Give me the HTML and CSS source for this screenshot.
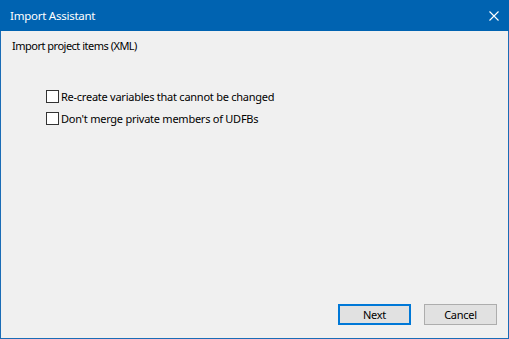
FILE: index.html
```html
<!DOCTYPE html>
<html lang="en">
<head>
	<meta charset="UTF-8">
	<meta name="viewport" content="width=device-width, initial-scale=1.0">
	<title>Import Assistant</title>
	<link rel="stylesheet" href="styles.css">
</head>
<body>
	<div class="window">
		<div class="titlebar">
			<span class="title">Import Assistant</span>
			<button class="close" aria-label="Close">
				<svg width="10" height="10" viewBox="0 0 10 10">
					<path d="M0.5 0.5 L9.5 9.5 M9.5 0.5 L0.5 9.5" stroke="#fff" stroke-width="1.1" fill="none"/>
				</svg>
			</button>
		</div>
		<div class="content">
			<p class="heading">Import project items (XML)</p>
			<div class="options">
				<label class="option">
					<input type="checkbox">
					<span class="box"></span>
					<span>Re-create variables that cannot be changed</span>
				</label>
				<label class="option">
					<input type="checkbox">
					<span class="box"></span>
					<span>Don't merge private members of UDFBs</span>
				</label>
			</div>
		</div>
		<div class="buttons">
			<button class="btn btn-default">Next</button>
			<button class="btn">Cancel</button>
		</div>
	</div>
</body>
</html>
```

FILE: styles.css
```css
body {
	margin: 0;
	font-family: "Noto Sans", sans-serif;
	font-size: 11px;
	letter-spacing: -0.25px;
	color: #000;
}
.window {
	width: 509px;
	height: 339px;
	box-sizing: border-box;
	border: 1px solid #1a6cb6;
	border-top: none;
	background-color: #f0f0f0;
	display: flex;
	flex-direction: column;
}
.titlebar {
	height: 31px;
	margin: 0 -1px;
	background-color: #0063b1;
	color: #fff;
	display: flex;
	align-items: center;
	justify-content: space-between;
	padding: 0 10px 0 10px;
}
.title {
	font-size: 11.5px;
}
.close {
	background: none;
	border: none;
	padding: 0;
	width: 10px;
	height: 10px;
	display: flex;
}
.content {
	flex: 1;
	padding: 7px 10px 0 11px;
}
.heading {
	margin: 0;
	line-height: 16px;
	letter-spacing: -0.5px;
}
.options {
	margin-top: 34px;
	padding-left: 34px;
	display: flex;
	flex-direction: column;
	gap: 6px;
}
.option {
	display: flex;
	align-items: center;
	height: 16px;
}
.option input {
	display: none;
}
.box {
	width: 11px;
	height: 11px;
	border: 1px solid #333;
	background-color: #fff;
	margin-right: 2px;
}
.buttons {
	display: flex;
	justify-content: flex-end;
	gap: 13px;
	padding: 0 11px 13px 0;
}
.btn {
	width: 73px;
	height: 21px;
	box-sizing: border-box;
	background-color: #e1e1e1;
	border: 1px solid #adadad;
	font-family: inherit;
	font-size: 11px;
	letter-spacing: inherit;
	padding: 0;
	color: #000;
}
.btn-default {
	border: 2px solid #0078d7;
}
```
